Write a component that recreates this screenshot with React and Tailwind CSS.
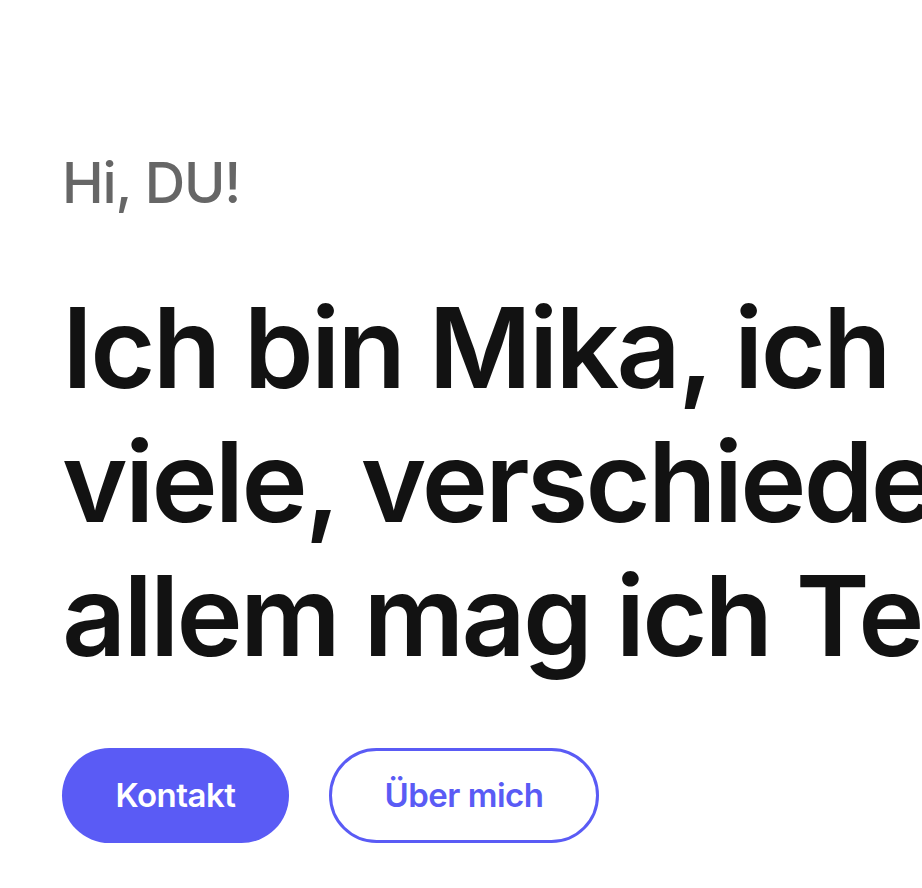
import React from 'react';

export default function App() {
  return (
    <div className="w-full h-[888px] overflow-hidden bg-white font-['Inter','Liberation_Sans',sans-serif]">
      <div className="px-[62px] pt-[150px]">
        <p className="text-[56px] leading-[1.2] font-medium tracking-[-0.02em] text-[#666666]">Hi, DU!</p>

        {/* Headline, läuft rechts aus dem Bild */}
        <h1 className="mt-[63px] text-[112px] leading-[134px] font-semibold tracking-[-0.025em] text-[#121212] whitespace-nowrap">
          Ich bin Mika, ich<br />
          viele, verschiedene Dinge, vor<br />
          allem mag ich Technik.
        </h1>

        <div className="mt-[66px] flex items-center gap-[40px]">
          <button className="w-[227px] h-[95px] rounded-full bg-[#5a5bf5] text-white text-[33px] font-semibold tracking-[-0.015em]">
            Kontakt
          </button>
          <button className="w-[270px] h-[95px] rounded-full border-[3px] border-[#5a5bf5] text-[#5a5bf5] text-[33px] font-semibold tracking-[-0.015em]">
            Über mich
          </button>
        </div>
      </div>
    </div>
  );
}
